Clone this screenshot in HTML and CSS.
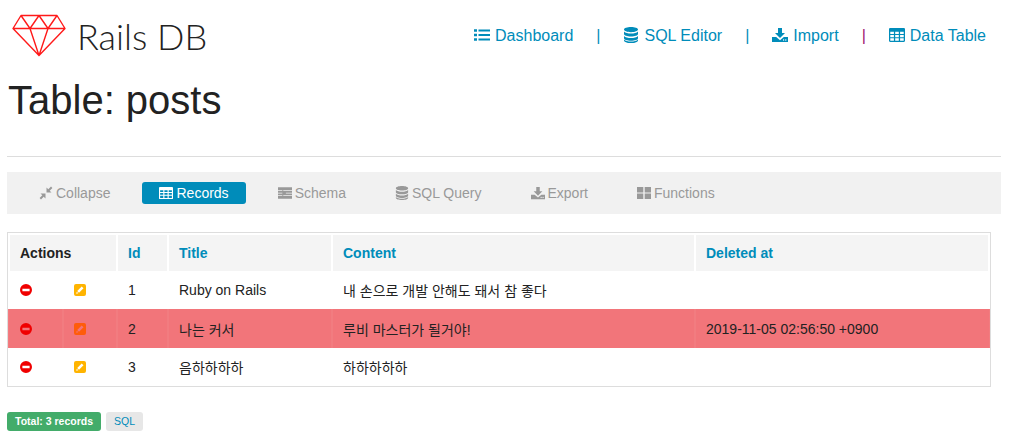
FILE: index.html
```html
<!DOCTYPE html>
<html lang="en">
<head>
    <meta charset="UTF-8">
    <meta name="viewport" content="width=device-width, initial-scale=1.0">
    <title>Rails DB</title>
    <link rel="stylesheet" href="styles.css">
</head>
<body>
    <svg class="icon-defs" width="0" height="0">
        <defs>
            <symbol id="i-list" viewBox="0 0 16 14">
                <path d="M0 1.2h3v2.6H0zM0 5.7h3v2.6H0zM0 10.2h3v2.6H0zM4.5 1.4H16v2.2H4.5zM4.5 5.9H16v2.2H4.5zM4.5 10.4H16v2.2H4.5z"/>
            </symbol>
            <symbol id="i-db" viewBox="0 0 14 16">
                <path d="M7 0c3.9 0 7 1.1 7 2.6S10.900 5.200 7 5.200 0 4.100 0 2.600 3.100 0 7 0zM0 4.600C1.300 6 4 6.600 7 6.600s5.700-.6 7-2V7c0 1.400-3.100 2.500-7 2.500S0 8.400 0 7zM0 8.900c1.300 1.400 4 2 7 2s5.700-.6 7-2v2.300c0 1.400-3.100 2.500-7 2.500S0 12.600 0 11.200zM0 12.500c1.300 1.400 4 2 7 2s5.700-.6 7-2v.9c0 1.500-3.100 2.600-7 2.600s-7-1.100-7-2.600z"/>
            </symbol>
            <symbol id="i-download" viewBox="0 0 16 14">
                <path fill-rule="evenodd" d="M6 0h4v5h3l-5 5-5-5h3zM0 9h4.200L8 12.200 11.800 9H16v5H0zM11.600 11.300a.7.700 0 1 0 0 1.400.7.700 0 0 0 0-1.400zM13.800 11.300a.7.700 0 1 0 0 1.400.7.700 0 0 0 0-1.400z"/>
            </symbol>
            <symbol id="i-table" viewBox="0 0 15 13">
                <path fill-rule="evenodd" d="M1 0h13a1 1 0 0 1 1 1v11a1 1 0 0 1-1 1H1a1 1 0 0 1-1-1V1a1 1 0 0 1 1-1zM1.200 3.500v2h3.400v-2zM5.800 3.500v2h3.400v-2zM10.400 3.500v2h3.400v-2zM1.200 6.500v2h3.400v-2zM5.800 6.500v2h3.400v-2zM10.400 6.500v2h3.400v-2zM1.200 9.500v2.300h3.400V9.500zM5.800 9.500v2.300h3.400V9.500zM10.400 9.500v2.300h3.400V9.500z"/>
            </symbol>
            <symbol id="i-compress" viewBox="0 0 14 14">
                <path d="M7.500 1.500l1.800 1.800L12 .6l1.400 1.400-2.700 2.700 1.800 1.800H7.500zM1.500 7.500h5v5l-1.800-1.800L2 13.400.600 12l2.700-2.700z"/>
            </symbol>
            <symbol id="i-schema" viewBox="0 0 16 13">
                <path fill-rule="evenodd" d="M0 0h16v13H0zM0 3.200h5v.8H0zM0 6.200h5v.8H0zM0 9.200h5v.8H0zM6 3.200h10v.8H6zM9 6.200h7v.8H9zM6 9.200h10v.8H6z"/>
            </symbol>
            <symbol id="i-grid" viewBox="0 0 14 12">
                <path d="M0 0h6.300v5.400H0zM7.700 0H14v5.400H7.700zM0 6.600h6.300V12H0zM7.700 6.600H14V12H7.700z"/>
            </symbol>
            <symbol id="i-remove" viewBox="0 0 12 12">
                <path fill-rule="evenodd" d="M6 0a6 6 0 1 1 0 12A6 6 0 0 1 6 0zM2.400 4.800v2.400h7.200V4.800z"/>
            </symbol>
            <symbol id="i-edit" viewBox="0 0 12 12">
                <path fill-rule="evenodd" d="M2 0h8a2 2 0 0 1 2 2v8a2 2 0 0 1-2 2H2a2 2 0 0 1-2-2V2a2 2 0 0 1 2-2zM7.700 2.500L3.200 7l1.800 1.800 4.500-4.500zM2.800 7.700l-.6 2.100 2.100-.6z"/>
            </symbol>
        </defs>
    </svg>

    <header class="top-bar">
        <a class="brand" href="#">
            <svg class="brand-logo" viewBox="0 0 56 44" width="56" height="44">
                <path d="M9 1.500h36L53 14.500 27 41.500 1 14.500zM1 14.500h52M9 1.500l9 13 9-13 9 13 9-13M18 14.500l9 27 9-27"/>
            </svg>
            <span>Rails DB</span>
        </a>
        <nav class="main-nav">
            <a href="#"><svg class="icon icon-16"><use href="#i-list"/></svg>Dashboard</a>
            <span class="sep">|</span>
            <a href="#"><svg class="icon icon-16"><use href="#i-db"/></svg>SQL Editor</a>
            <span class="sep">|</span>
            <a href="#"><svg class="icon icon-16"><use href="#i-download"/></svg>Import</a>
            <span class="sep sep-last">|</span>
            <a href="#"><svg class="icon icon-16"><use href="#i-table"/></svg>Data Table</a>
        </nav>
    </header>

    <h1>Table: posts</h1>
    <hr>

    <div class="tabs">
        <a href="#"><svg class="icon"><use href="#i-compress"/></svg>Collapse</a>
        <a href="#" class="active"><svg class="icon"><use href="#i-table"/></svg>Records</a>
        <a href="#"><svg class="icon"><use href="#i-schema"/></svg>Schema</a>
        <a href="#"><svg class="icon"><use href="#i-db"/></svg>SQL Query</a>
        <a href="#"><svg class="icon"><use href="#i-download"/></svg>Export</a>
        <a href="#"><svg class="icon"><use href="#i-grid"/></svg>Functions</a>
    </div>

    <table class="records">
        <colgroup>
            <col class="c-act1"><col class="c-act2"><col class="c-id"><col class="c-title"><col class="c-content"><col>
        </colgroup>
        <thead>
            <tr>
                <th colspan="2" class="plain">Actions</th>
                <th>Id</th>
                <th>Title</th>
                <th>Content</th>
                <th>Deleted at</th>
            </tr>
        </thead>
        <tbody>
            <tr>
                <td><svg class="act act-del"><use href="#i-remove"/></svg></td>
                <td><svg class="act act-edit"><use href="#i-edit"/></svg></td>
                <td>1</td>
                <td>Ruby on Rails</td>
                <td>내 손으로 개발 안해도 돼서 참 좋다</td>
                <td></td>
            </tr>
            <tr class="deleted">
                <td><svg class="act act-del"><use href="#i-remove"/></svg></td>
                <td><svg class="act act-edit"><use href="#i-edit"/></svg></td>
                <td>2</td>
                <td>나는 커서</td>
                <td>루비 마스터가 될거야!</td>
                <td>2019-11-05 02:56:50 +0900</td>
            </tr>
            <tr>
                <td><svg class="act act-del"><use href="#i-remove"/></svg></td>
                <td><svg class="act act-edit"><use href="#i-edit"/></svg></td>
                <td>3</td>
                <td>음하하하하</td>
                <td>하하하하하</td>
                <td></td>
            </tr>
        </tbody>
    </table>

    <div class="labels">
        <span class="label label-success">Total: 3 records</span>
        <a href="#" class="label label-sql">SQL</a>
    </div>
</body>
</html>
```

FILE: styles.css
```css
/* General */
body {
    margin: 0;
    padding: 0 19px 0 7px;
    font-family: "Liberation Sans", "Noto Sans CJK KR", sans-serif;
    color: #222222;
    background: #ffffff;
}

a {
    color: #008cba;
    text-decoration: none;
}

.icon-defs {
    position: absolute;
}

.icon {
    width: 14px;
    height: 14px;
    margin-right: 3px;
    vertical-align: -2px;
    fill: currentColor;
}

.icon-16 {
    width: 16px;
    height: 16px;
    margin-right: 5px;
    vertical-align: -2px;
}

/* Header */
.top-bar {
    display: flex;
    align-items: center;
    justify-content: space-between;
    height: 72px;
}

.brand {
    display: flex;
    align-items: center;
    gap: 9px;
    margin-left: 5px;
    font-family: Lato, sans-serif;
    font-weight: 300;
    font-size: 36px;
    color: #222222;
}

.brand-logo {
    fill: none;
    stroke: #ff1a1a;
    stroke-width: 1.400;
    stroke-linejoin: round;
}

.main-nav {
    display: flex;
    align-items: center;
    margin-right: 15px;
    font-size: 16px;
}

.sep {
    margin: 0 23px;
    color: #008cba;
}

.sep-last {
    color: #a0146e;
}

h1 {
    margin: 0;
    padding: 5px 0 0 1px;
    font-size: 40px;
    font-weight: 400;
    line-height: 46px;
    color: #222222;
}

hr {
    height: 1px;
    margin: 33px 0 15px;
    border: 0;
    background: #dddddd;
}

/* Tabs */
.tabs {
    display: flex;
    align-items: center;
    gap: 15px;
    height: 42px;
    padding-left: 15px;
    background: #f1f1f1;
    font-size: 14px;
}

.tabs a {
    padding: 0 17px;
    line-height: 22px;
    border-radius: 3px;
    color: #999999;
}

.tabs a.active {
    background: #008cba;
    color: #ffffff;
}

/* Records table */
.records {
    width: 984px;
    margin-top: 18px;
    table-layout: fixed;
    border-collapse: separate;
    border-spacing: 0;
    border: 1px solid #dddddd;
    font-size: 14px;
}

.c-act1 { width: 55px; }
.c-act2 { width: 54px; }
.c-id { width: 51px; }
.c-title { width: 164px; }
.c-content { width: 363px; }

.records th {
    height: 36px;
    padding: 0 10px;
    border: 1px solid #ffffff;
    border-top-width: 2px;
    border-bottom: 0;
    background: #f4f4f4;
    background-clip: padding-box;
    color: #008cba;
    text-align: left;
    font-weight: 700;
}

.records th:first-child {
    border-left-width: 2px;
}

.records th:last-child {
    border-right-width: 2px;
}

.records th.plain {
    color: #222222;
}

.records td {
    height: 38px;
    padding: 0 10px;
    border-left: 1px solid transparent;
    border-right: 1px solid transparent;
    color: #222222;
}

.records tbody tr:nth-child(2) td {
    height: 39px;
}

.records tr.deleted td {
    background: #f2757a;
    border-left-color: rgba(255, 255, 255, 0.05);
    border-right-color: rgba(255, 255, 255, 0.05);
}

.act {
    display: block;
    width: 12px;
    height: 12px;
}

.act-del {
    margin-left: 1px;
    fill: #f00000;
}

.act-edit {
    fill: #ffb400;
}

.deleted .act-edit {
    fill: #ff5c0a;
}

/* Labels */
.labels {
    display: flex;
    gap: 5px;
    margin-top: 25px;
}

.label {
    padding: 0 8px;
    line-height: 19px;
    border-radius: 3px;
    font-size: 10.500px;
}

.label-success {
    background: #43ac6a;
    color: #ffffff;
    font-weight: 700;
}

.label-sql {
    background: #e7e7e7;
    color: #008cba;
}
```
